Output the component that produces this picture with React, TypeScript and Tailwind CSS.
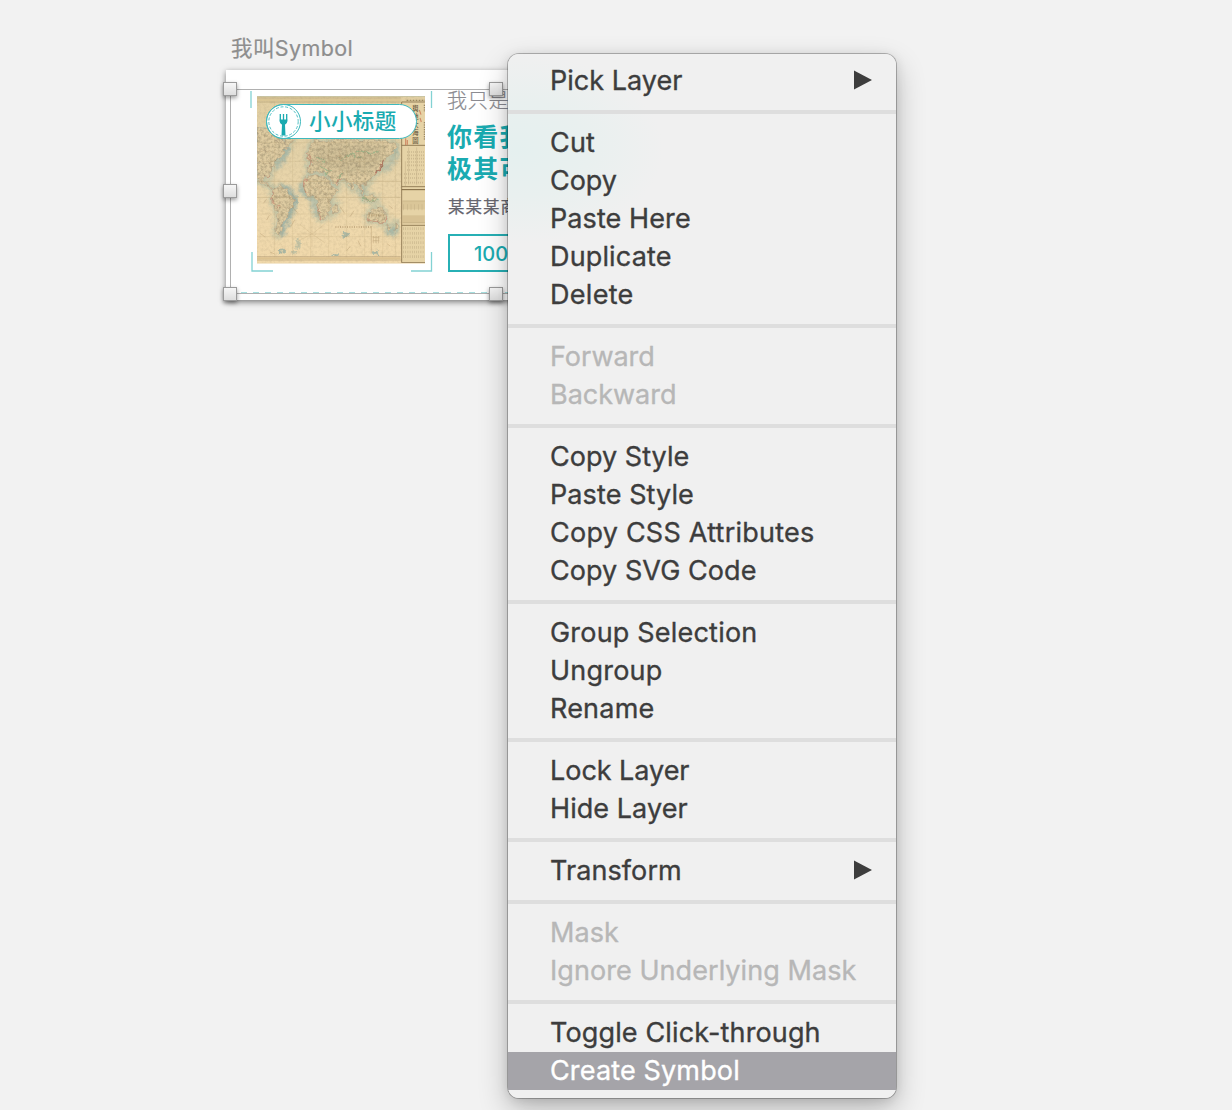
import React from "react";

type Item = { label: string; tracking: string; disabled?: boolean; submenu?: boolean; active?: boolean };

const groups: Item[][] = [
  [{ label: "Pick Layer", tracking: "tracking-[0.02px]", submenu: true }],
  [
    { label: "Cut", tracking: "tracking-[0.2px]" },
    { label: "Copy", tracking: "tracking-[-0.05px]" },
    { label: "Paste Here", tracking: "tracking-[0.09px]" },
    { label: "Duplicate", tracking: "tracking-[0.15px]" },
    { label: "Delete", tracking: "tracking-[0.3px]" },
  ],
  [
    { label: "Forward", tracking: "tracking-[-0.02px]", disabled: true },
    { label: "Backward", tracking: "tracking-[-0.02px]", disabled: true },
  ],
  [
    { label: "Copy Style", tracking: "tracking-[0.03px]" },
    { label: "Paste Style", tracking: "tracking-[0.1px]" },
    { label: "Copy CSS Attributes", tracking: "tracking-[0.24px]" },
    { label: "Copy SVG Code", tracking: "tracking-[0.06px]" },
  ],
  [
    { label: "Group Selection", tracking: "tracking-[0.2px]" },
    { label: "Ungroup", tracking: "tracking-[0.22px]" },
    { label: "Rename", tracking: "tracking-[0.2px]" },
  ],
  [
    { label: "Lock Layer", tracking: "tracking-[-0.04px]" },
    { label: "Hide Layer", tracking: "tracking-[0.06px]" },
  ],
  [{ label: "Transform", tracking: "tracking-[0.08px]", submenu: true }],
  [
    { label: "Mask", tracking: "tracking-[0.1px]", disabled: true },
    { label: "Ignore Underlying Mask", tracking: "tracking-[0.06px]", disabled: true },
  ],
  [
    { label: "Toggle Click-through", tracking: "tracking-[0.14px]" },
    { label: "Create Symbol", tracking: "tracking-[0.15px]", active: true },
  ],
];

function MenuRow({ item }: { item: Item }) {
  const color = item.active ? "bg-[#a5a4a9] text-white" : item.disabled ? "text-[#b7b7b7]" : "text-[#3d3d3d]";
  return (
    <div className={`flex h-[38px] items-center justify-between pl-[42px] pr-6 text-[27px] leading-[38px] [-webkit-text-stroke:0.35px] ${color} ${item.tracking}`}>
      <span className="-mt-px whitespace-nowrap">{item.label}</span>
      {item.submenu && (
        <svg className="-mt-[2px]" width="19" height="20" viewBox="0 0 19 20">
          <path d="M1 0.5 19 10 1 19.5Z" fill="#3d3d3d" />
        </svg>
      )}
    </div>
  );
}

function ContextMenu() {
  return (
    <div className="absolute left-[508px] top-[54px] w-[388px] rounded-[11px] shadow-[0_0_0_1px_rgba(0,0,0,0.25),0_12px_30px_rgba(0,0,0,0.24),0_2px_12px_rgba(0,0,0,0.12)]">
      <div className="rounded-[11px] bg-[#f0f0f0] bg-[radial-gradient(ellipse_145px_95px_at_10px_95px,#e5f0ef_0%,#e9f0ef_50%,#f0f0f0_100%)] py-2">
        {groups.map((group, i) => (
          <React.Fragment key={i}>
            {i > 0 && <div className="my-[10px] h-1 bg-[#dedede]" />}
            {group.map((item) => (
              <MenuRow key={item.label} item={item} />
            ))}
          </React.Fragment>
        ))}
      </div>
    </div>
  );
}

const LAND =
  "M21 112 L70 120 L84 140 L103 155 L108 175 L98 190 L90 205 L76 214 L66 236 L60 262 L42 258 L34 272 L50 282 L66 292 L52 288 L21 268Z " +
  "M76 148 L100 146 L90 162Z M104 140 L130 140 L120 168 L108 172Z " +
  "M70 296 L88 288 L112 302 L120 318 L134 328 L130 350 L118 362 L110 384 L98 396 L92 424 L84 438 L76 430 L80 400 L84 370 L68 344 L66 324Z " +
  "M170 262 L196 254 L232 264 L246 290 L262 300 L246 318 L242 350 L228 380 L212 392 L204 372 L204 340 L194 320 L168 314 L158 290Z " +
  "M248 352 L258 342 L260 360 L248 374Z " +
  "M176 250 L172 232 L190 222 L172 206 L176 180 L196 150 L230 158 L270 148 L330 152 L386 150 L428 158 L440 174 L414 200 L396 214 L398 230 L380 250 L368 262 L356 270 L350 290 L336 280 L330 298 L312 272 L306 296 L290 272 L272 264 L262 288 L242 268 L226 250 L200 244Z " +
  "M328 284 L340 302 L334 314Z M342 320 L360 318 L382 324 L374 336 L346 330Z " +
  "M354 372 L372 356 L386 350 L402 362 L408 386 L394 402 L374 394 L354 396Z M436 396 L448 410 L434 424Z M410 406 L424 410 L416 424Z";

const SPECKS = "M86 492 q8 -16 20 -4 M366 494 q10 -16 22 0 M278 434 q6 -8 14 0 q-6 10 -14 0Z M244 498 q10 -8 22 -4";

function MapPicture() {
  return (
    <svg className="block" width="168" height="168" viewBox="21 18 504 504">
      <defs>
        <filter id="soft" x="-10%" y="-10%" width="120%" height="120%">
          <feGaussianBlur stdDeviation="6" />
        </filter>
        <filter id="rough" x="0" y="0" width="100%" height="100%" colorInterpolationFilters="sRGB">
          <feTurbulence type="fractalNoise" baseFrequency="0.07" numOctaves="3" seed="5" result="n" />
          <feDisplacementMap in="SourceGraphic" in2="n" scale="20" xChannelSelector="R" yChannelSelector="G" />
        </filter>
        <filter id="grain" x="0" y="0" width="100%" height="100%" colorInterpolationFilters="sRGB">
          <feTurbulence type="fractalNoise" baseFrequency="0.12" numOctaves="3" seed="8" />
          <feColorMatrix values="0 0 0 0 0.5  0 0 0 0 0.46  0 0 0 0 0.36  1.8 0 0 0 -0.7" />
        </filter>
        <clipPath id="land">
          <path d={LAND} />
        </clipPath>
        <linearGradient id="paper" x1="0" y1="0" x2="0" y2="1">
          <stop offset="0" stopColor="#e2cfa2" />
          <stop offset="0.35" stopColor="#e4d2a8" />
          <stop offset="0.7" stopColor="#eed8ac" />
          <stop offset="1" stopColor="#f1d9ab" />
        </linearGradient>
      </defs>
      <rect x="21" y="18" width="504" height="504" fill="url(#paper)" />
      <g filter="url(#rough)">
        <path d={LAND} fill="none" stroke="#93b0a3" strokeWidth="15" opacity="0.5" filter="url(#soft)" />
        <path d="M96 288 L120 302 L138 330 L126 360 L104 402 L96 438" fill="none" stroke="#6595a2" strokeWidth="13" opacity="0.6" filter="url(#soft)" />
        <path d="M104 158 L114 184 L92 216 L80 234" fill="none" stroke="#6a9ca7" strokeWidth="13" opacity="0.5" filter="url(#soft)" />
        <path d="M446 172 L430 210 L404 244 M344 300 L330 310 M156 280 L158 304 L188 330 L198 378 M410 420 L426 430 L440 420" fill="none" stroke="#7aa4a8" strokeWidth="14" opacity="0.5" filter="url(#soft)" />
        <path d={SPECKS} fill="none" stroke="#7fa3a0" strokeWidth="8" opacity="0.6" />
        <path d="M144 446 v30 M124 490 l14 -6" stroke="#84a59b" strokeWidth="9" opacity="0.4" />
        <path d={LAND} fill="#decba1" stroke="#bda78a" strokeWidth="2" />
        <path d="M190 168 L260 160 L330 158 L410 166 L388 220 L354 250 L290 250 L236 238 L190 226Z" fill="#cbbb94" opacity="0.7" filter="url(#soft)" />
        <path d="M172 190 L184 212 L176 234 M174 264 L160 286 L168 308 M204 350 L212 390 M70 300 L66 330 L84 352 M354 390 L374 392 L396 400 L408 380 M262 280 L272 266 M40 260 L60 262" fill="none" stroke="#c98f78" strokeWidth="4" opacity="0.7" />
        <path d="M396 208 L400 222 L382 244 L372 252" fill="none" stroke="#a45b4e" strokeWidth="5" opacity="0.7" />
        <path d="M214 232 L240 242 L226 256 M268 208 L300 194 L340 206 M336 322 L364 334 L386 326 M320 180 L356 190 L386 184 M200 206 L226 214 M262 262 L278 252" fill="none" stroke="#86b083" strokeWidth="4" opacity="0.6" />
        <path d="M176 292 H240 M204 276 V370 M220 300 L238 340 M86 306 L124 330 M82 350 L112 352 M300 250 L316 270 M230 200 L380 206 M270 170 L274 250 M330 180 L326 250 M370 360 V380 M30 180 L80 190 M40 220 L70 214" fill="none" stroke="#a98e68" strokeWidth="2" opacity="0.4" />
      </g>
      <g clipPath="url(#land)">
        <rect x="21" y="100" width="434" height="340" filter="url(#grain)" opacity="0.45" />
      </g>
      <rect x="21" y="18" width="504" height="504" filter="url(#grain)" opacity="0.15" />
      <g stroke="#ab9568" fill="none" strokeWidth="1.5" opacity="0.32">
        <path d="M74 36V504 M128 140V504 M182 140V504 M236 140V504 M290 140V504 M344 140V504 M398 140V504 M436 36V504" />
        <path d="M21 158H452 M21 214H452 M21 372H452 M21 440H452" />
        <path d="M21 274H452 M21 322H452" strokeWidth="3" />
      </g>
      <g stroke="#a88b61" fill="none" opacity="0.5">
        <path d="M186 432 L150 404 M186 432 L222 404 M186 432 L146 452 M186 432 L224 458 M186 432 V398 M186 432 V470 M186 432 H140 M186 432 H230" />
        <path d="M256 411H364" strokeWidth="6" strokeDasharray="3 4" />
        <path d="M364 408V490 M124 346l18 22 M134 390l-12 20 M300 380l12 -18 M324 452l8 16 M50 390l8 -14 M30 430l14 10 M270 350l14 20 M416 346l12 10 M60 486l14 6 M40 340l10 -12 M300 470l-10 12 M410 460l10 8" strokeWidth="2" />
        <path d="M356 376H402" strokeWidth="7" strokeDasharray="4 3" />
        <path d="M368 452H388 M368 442H388 M370 438V460 M378 438V460 M386 438V460" strokeWidth="2" />
      </g>
      <path d="M21 24H452 M21 36H452" stroke="#a08d60" strokeWidth="1.5" />
      <path d="M21 30H452" stroke="#d8c391" strokeWidth="5" />
      <path d="M21 500H452 M21 510H525" stroke="#a8916a" strokeWidth="1.5" />
      <path d="M21 505H452" stroke="#dcc290" strokeWidth="6" />
      <path d="M21 19H525" stroke="#b8bda4" strokeWidth="2" />

      <rect x="455" y="36" width="70" height="482" fill="#e6d3a6" />
      <path d="M470 31H525" stroke="#9a885f" strokeWidth="4" strokeDasharray="5 4" />
      <g stroke="#86704a" strokeWidth="2.5" fill="none">
        <path d="M455 36V518H525 M455 36H525 M455 166H525 M455 290H525 M455 406H525" />
        <path d="M455 299H525" stroke="#7c643e" strokeWidth="3" />
      </g>
      <g stroke="#998563" fill="none" opacity="0.5">
        <path d="M472 186H522 M472 196H522 M472 206H522 M472 216H522 M472 226H522 M472 240H522 M462 252H522 M462 264H522 M462 278H522" strokeWidth="5" strokeDasharray="2 4" />
        <path d="M466 214V288 M476 172V284 M500 172V284" strokeWidth="1.5" />
        <path d="M460 416H520 M460 430H520 M460 444H520 M460 458H520 M460 472H520 M460 486H520 M460 500H520" strokeWidth="8" strokeDasharray="1.5 5" />
        <path d="M458 333H525 M458 398H525" strokeWidth="1.5" />
        <path d="M460 352H520" strokeWidth="18" strokeDasharray="2 9" opacity="0.6" />
      </g>
      <rect x="457" y="332" width="67" height="26" fill="#b9a171" opacity="0.25" />
      <rect x="457" y="376" width="67" height="24" fill="#b9a171" opacity="0.35" />
      <g fontFamily="'Noto Sans CJK TC', sans-serif" fontSize="19" fontWeight="500" fill="#6b5b3e">
        <text x="487" y="62">輿</text>
        <text x="487" y="87">地</text>
        <text x="487" y="112">大</text>
        <text x="487" y="135">海</text>
        <text x="487" y="160">圖</text>
      </g>
      <path d="M467 145V166 M472 150V164 M508 60l5 14 M510 84l4 12" stroke="#c56543" strokeWidth="3.5" opacity="0.65" />
      <path d="M523 44V66 M523 96V150" stroke="#8a7858" strokeWidth="3" strokeDasharray="4 3" />
      <path d="M21 520.5H525" stroke="#f4e7ce" strokeWidth="3" />
    </svg>
  );
}

function Badge() {
  return (
    <div className="absolute left-[9px] top-[8px] flex h-[35px] w-[151px] items-center rounded-full border border-[#3fb9bd] bg-white">
      <svg className="-ml-px shrink-0" width="35" height="35" viewBox="0 0 35 35" fill="none">
        <circle cx="17.5" cy="17.5" r="17" stroke="#3fb9bd" />
        <circle cx="17.5" cy="17.5" r="14.7" stroke="#3fb9bd" strokeDasharray="3 1.7" strokeWidth="0.9" />
        <path d="M14.3 10V16.500Q14.300 19 17.500 19Q20.700 19 20.700 16.500V10M17.500 10V19" stroke="#1aaab0" strokeWidth="1.3" />
        <path d="M13.700 15.500H21.300Q21.300 20 19 20.600L19.500 31.500H15.500L16 20.600Q13.700 20 13.700 15.500Z" fill="#1aaab0" />
      </svg>
      <span className="-mt-px ml-[8px] whitespace-nowrap text-[21.5px] font-medium leading-[33px] tracking-[0.4px] text-[#1aabb1]">小小标题</span>
    </div>
  );
}

function Handle({ place }: { place: string }) {
  return (
    <div className={`absolute size-[14px] border border-[#9b9b9b] bg-linear-to-b from-[#f6f6f6] to-[#dedede] shadow-[0_2px_4px_rgba(0,0,0,0.4)] ${place}`} />
  );
}

function Artboard() {
  return (
    <div className="absolute left-[226px] top-[70px] h-[230px] w-[540px] bg-white shadow-[0_2px_6px_rgba(0,0,0,0.5)]">
      <div className="flex pl-[31px] pt-[26px]">
        <div className="relative size-[168px]">
          <MapPicture />
          <Badge />
          <svg className="absolute -left-[7px] -top-[7px]" width="183" height="184" viewBox="0 0 183 184" fill="none" stroke="#83d2d3" strokeWidth="1.3">
            <path d="M1 2V19M181.5 2V19M2 163V182H23M181.5 163V182H161" />
          </svg>
        </div>
        <div className="-mt-[7px] ml-[22px] flex flex-col whitespace-nowrap">
          <span className="h-6 text-[20px] font-light leading-6 tracking-[0.8px] text-[#8b8b91] [-webkit-text-stroke:0.2px]">我只是</span>
          <div className="mt-[8px] text-[25px] font-bold leading-8 tracking-[1.2px] text-[#1aabb1]">
            <div>你看我</div>
            <div>极其可</div>
          </div>
          <span className="ml-px mt-[10px] text-[16.5px] leading-6 tracking-[1px] text-[#66666f] [-webkit-text-stroke:0.2px]">某某某商</span>
          <div className="ml-px mt-[15px] flex h-[38px] w-[124px] items-center border-2 border-[#27b0b5] pl-6 pt-px text-[20px] font-medium text-[#1aabb1]">100</div>
        </div>
      </div>
      <svg className="absolute left-0 top-0" width="540" height="230" fill="none">
        <path d="M4.5 19.5H535.5V223.5H4.5Z" stroke="#b0b0b0" />
        <path d="M15 222.5H530" stroke="#a5dede" strokeDasharray="6 6" />
      </svg>
      <Handle place="-left-[3px] top-[12px]" />
      <Handle place="left-[263px] top-[12px]" />
      <Handle place="-left-[3px] top-[114px]" />
      <Handle place="-left-[3px] top-[217px]" />
      <Handle place="left-[263px] top-[217px]" />
    </div>
  );
}

export default function App() {
  return (
    <main className="relative h-[1110px] w-[1232px] overflow-hidden bg-[#f2f2f2] font-['Inter','Noto_Sans_CJK_SC',sans-serif]">
      <div className="absolute left-[231px] top-[32px] whitespace-nowrap text-[21.5px] leading-8 tracking-[0.4px] text-[#8e8e8e] [-webkit-text-stroke:0.2px]">我叫Symbol</div>
      <Artboard />
      <ContextMenu />
    </main>
  );
}
